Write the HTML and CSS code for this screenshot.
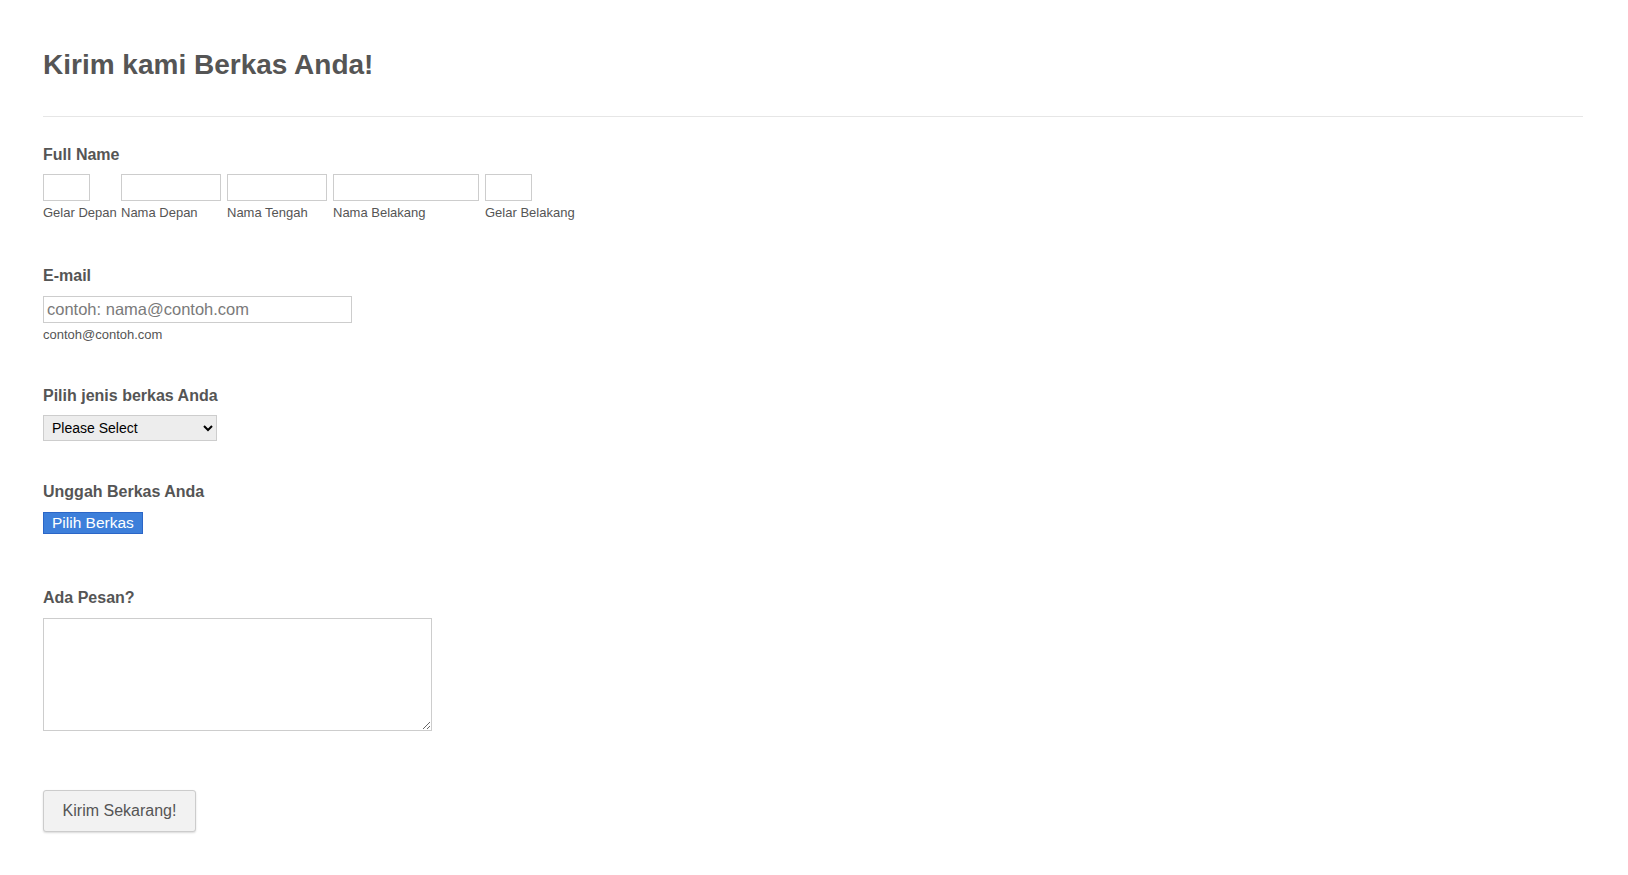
FILE: index.html
```html
<!DOCTYPE html>
<html lang="id">
<head>
    <meta charset="UTF-8">
    <meta name="viewport" content="width=device-width, initial-scale=1.0">
    <title>Kirim kami Berkas Anda!</title>
    <link rel="stylesheet" href="styles.css">
</head>
<body>
    <form class="form" action="#" onsubmit="return false;">
        <header class="form-header">
            <h1 class="form-title">Kirim kami Berkas Anda!</h1>
        </header>

        <div class="field field-name">
            <label class="field-label">Full Name</label>
            <div class="name-row">
                <div class="name-col name-col-first">
                    <input type="text" class="input input-xs">
                    <span class="sublabel">Gelar Depan</span>
                </div>
                <div class="name-col">
                    <input type="text" class="input input-md">
                    <span class="sublabel">Nama Depan</span>
                </div>
                <div class="name-col">
                    <input type="text" class="input input-md">
                    <span class="sublabel">Nama Tengah</span>
                </div>
                <div class="name-col">
                    <input type="text" class="input input-lg">
                    <span class="sublabel">Nama Belakang</span>
                </div>
                <div class="name-col">
                    <input type="text" class="input input-xs">
                    <span class="sublabel">Gelar Belakang</span>
                </div>
            </div>
        </div>

        <div class="field field-email">
            <label class="field-label" for="email">E-mail</label>
            <input type="email" id="email" class="input input-email" placeholder="contoh: nama@contoh.com">
            <span class="sublabel">contoh@contoh.com</span>
        </div>

        <div class="field field-select">
            <label class="field-label" for="jenis">Pilih jenis berkas Anda</label>
            <select id="jenis" class="select">
                <option>Please Select</option>
                <option>Dokumen</option>
                <option>Gambar</option>
                <option>Lainnya</option>
            </select>
        </div>

        <div class="field field-upload">
            <label class="field-label">Unggah Berkas Anda</label>
            <button type="button" class="upload-btn">Pilih Berkas</button>
        </div>

        <div class="field field-message">
            <label class="field-label" for="pesan">Ada Pesan?</label>
            <textarea id="pesan" class="textarea"></textarea>
        </div>

        <button type="submit" class="submit-btn">Kirim Sekarang!</button>
    </form>
</body>
</html>
```

FILE: styles.css
```css
:root {
    --text-color: #555555;
    --border-color: #cdcdcd;
    --line-color: #e6e6e6;
    --font-family: Arial, 'Liberation Sans', sans-serif;
}

* {
    margin: 0;
    padding: 0;
    box-sizing: border-box;
}

body {
    font-family: var(--font-family);
    color: var(--text-color);
    background: #ffffff;
}

.form {
    padding: 49px 45px 40px 43px;
}

.form-header {
    padding-bottom: 35px;
    border-bottom: 1px solid var(--line-color);
    margin-bottom: 28px;
}

.form-title {
    font-size: 28px;
    line-height: 32px;
    font-weight: bold;
}

.field {
    display: flex;
    flex-direction: column;
    align-items: flex-start;
}

.field-label {
    font-size: 16px;
    line-height: 20px;
    font-weight: bold;
    margin-bottom: 10px;
}

/* per-field spacing */
.field-name {
    margin-bottom: 45px;
}

.field-name .field-label {
    margin-bottom: 9px;
}

.field-email {
    margin-bottom: 43px;
}

.field-select {
    margin-bottom: 41px;
}

.field-select .field-label {
    margin-bottom: 9px;
}

.field-upload {
    margin-bottom: 54px;
}

.field-message {
    margin-bottom: 59px;
}

.name-row {
    display: flex;
    gap: 6px;
}

.name-col {
    display: flex;
    flex-direction: column;
}

.name-col-first {
    width: 72px;
}

.input {
    height: 27px;
    border: 1px solid var(--border-color);
    padding: 0 3px;
    font-family: var(--font-family);
    font-size: 16px;
    color: #333;
    outline: none;
}

.input-xs {
    width: 47px;
}

.input-md {
    width: 100px;
}

.input-lg {
    width: 146px;
}

.input-email {
    width: 309px;
    font-size: 16.5px;
}

.input::placeholder {
    color: #7a7a7a;
}

.sublabel {
    font-size: 13px;
    line-height: 16px;
    margin-top: 4px;
    white-space: nowrap;
}

.select {
    width: 174px;
    height: 26px;
    padding: 0 4px;
    border: 1px solid var(--border-color);
    background: #ededed;
    font-family: var(--font-family);
    font-size: 14px;
    color: #000;
}

.upload-btn {
    height: 22px;
    padding: 0 8px;
    border: 1px solid #2b66c7;
    background: #3d7fda;
    color: #ffffff;
    font-family: var(--font-family);
    font-size: 15.5px;
    line-height: 20px;
    cursor: pointer;
}

.textarea {
    width: 389px;
    height: 113px;
    border: 1px solid var(--border-color);
    font-family: var(--font-family);
    font-size: 14px;
    padding: 4px;
    outline: none;
}

.submit-btn {
    width: 153px;
    height: 42px;
    border: 1px solid #cccccc;
    border-radius: 3px;
    background: #f2f2f2;
    box-shadow: 0 1px 2px rgba(0, 0, 0, 0.15);
    color: var(--text-color);
    font-family: var(--font-family);
    font-size: 16px;
    cursor: pointer;
}
```
